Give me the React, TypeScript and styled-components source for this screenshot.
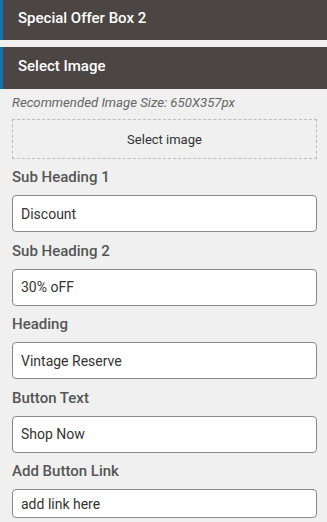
import React from 'react';
import styled, { createGlobalStyle } from 'styled-components';

const GlobalStyle = createGlobalStyle`
  html, body {
    margin: 0;
    padding: 0;
    background: #f0f0f0;
    font-family: Roboto, 'Liberation Sans', Arial, sans-serif;
  }
  * {
    box-sizing: border-box;
  }
`;

interface Field {
  label: string;
  value: string;
  compact?: boolean;
}

const fields: Field[] = [
  { label: 'Sub Heading 1', value: 'Discount' },
  { label: 'Sub Heading 2', value: '30% oFF' },
  { label: 'Heading', value: 'Vintage Reserve' },
  { label: 'Button Text', value: 'Shop Now' },
  { label: 'Add Button Link', value: 'add link here', compact: true },
];

const App = () => {
  return (
    <>
      <GlobalStyle />
      <Panel>
        <SectionBar $height={40} $gapBelow={7}>Special Offer Box 2</SectionBar>
        <SectionBar $height={42}>Select Image</SectionBar>
        <Body>
          <Hint>Recommended Image Size: 650X357px</Hint>
          <ImagePicker type='button'>Select image</ImagePicker>
          {fields.map((f) => (
            <FieldGroup key={f.label}>
              <Label>{f.label}</Label>
              <TextInput defaultValue={f.value} $compact={f.compact} readOnly />
            </FieldGroup>
          ))}
        </Body>
      </Panel>
    </>
  );
};

const Panel = styled.div`
  width: 327px;
  display: flex;
  flex-direction: column;
`;

const SectionBar = styled.div<{ $height: number; $gapBelow?: number }>`
  height: ${({ $height }) => $height}px;
  margin-bottom: ${({ $gapBelow }) => $gapBelow ?? 0}px;
  background: #4b4644;
  border-left: 3px solid #0b76b8;
  color: #ffffff;
  font-size: 15px;
  font-weight: 500;
  display: flex;
  align-items: center;
  padding-left: 15px;
  padding-bottom: 4px;
`;

const Body = styled.div`
  padding: 0 10px 0 12px;
  display: flex;
  flex-direction: column;
`;

const Hint = styled.p`
  margin: 6px 0 0;
  font-size: 13.2px;
  font-style: italic;
  color: #666666;
  line-height: 16px;
`;

const ImagePicker = styled.button`
  margin-top: 8px;
  height: 40px;
  width: 100%;
  background: transparent;
  border: 1px dashed #bcbcbc;
  font-family: inherit;
  font-size: 13px;
  color: #333333;
  cursor: pointer;
`;

const FieldGroup = styled.div`
  display: flex;
  flex-direction: column;
  margin-top: 10.5px;

  &:first-of-type {
    margin-top: 10px;
  }
`;

const Label = styled.label`
  font-size: 15px;
  font-weight: 500;
  color: #555555;
  line-height: 17px;
  margin-bottom: 9px;
`;

const TextInput = styled.input<{ $compact?: boolean }>`
  width: 100%;
  height: ${({ $compact }) => ($compact ? 29 : 37)}px;
  border: 1px solid #8a8a8a;
  border-radius: 4px;
  background: #ffffff;
  padding: 0 8px;
  font-family: inherit;
  font-size: 14px;
  color: #333333;
  outline: none;
`;

export default App;
